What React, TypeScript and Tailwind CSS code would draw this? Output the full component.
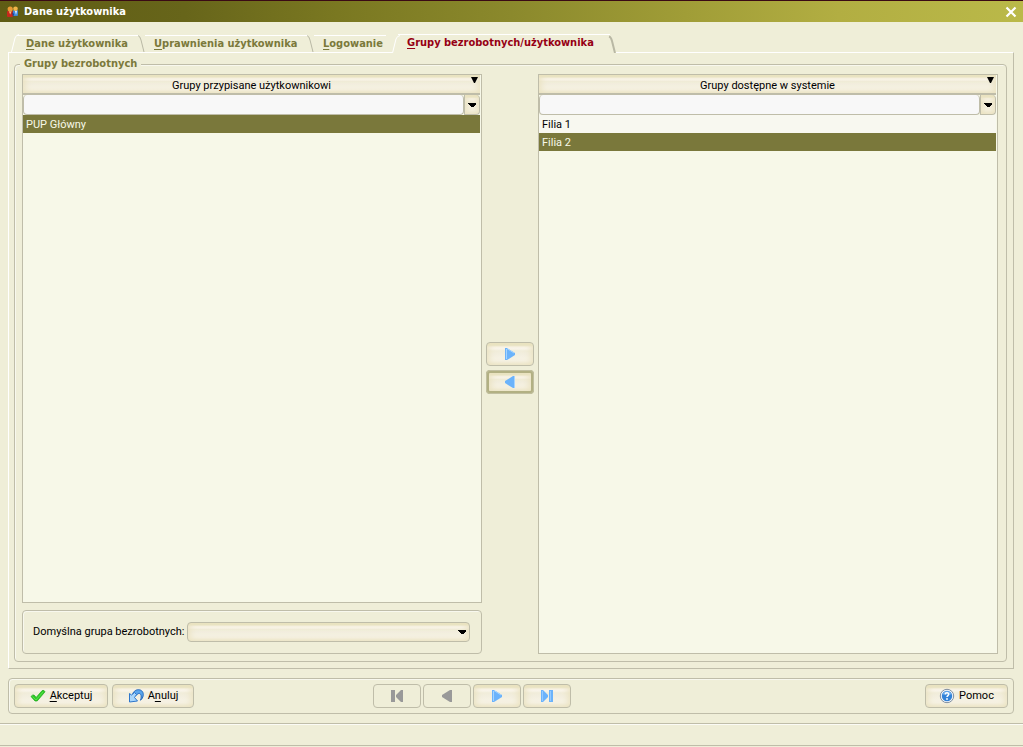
import { useState } from "react";
import type { ReactNode } from "react";

type Tab = { id: string; key: string; rest: string; width: string };

const tabs: Tab[] = [
  { id: "user", key: "D", rest: "ane użytkownika", width: "w-[134px]" },
  { id: "rights", key: "U", rest: "prawnienia użytkownika", width: "w-[169px]" },
  { id: "login", key: "L", rest: "ogowanie", width: "w-[78px]" },
  { id: "groups", key: "G", rest: "rupy bezrobotnych/użytkownika", width: "w-[224px]" },
];

const boldFont = "font-['DejaVu_Sans_Condensed','DejaVu_Sans',sans-serif] font-bold";

const glossy =
  "bg-[linear-gradient(to_bottom,#e9e5c0_0%,#e9e5c4_10%,#fcf8f2_18%,#fbf7f0_26%,#f1edda_36%,#f3efe0_55%,#f9f6ec_82%,#f3eedc_100%)] shadow-[inset_0_0_7px_2px_#eae2c0]";

function UsersIcon() {
  return (
    <svg width="12" height="12" viewBox="0 0 12 12" aria-hidden="true">
      <rect x="6" y="4" width="5" height="6" rx="1" fill="#3f86d6" />
      <circle cx="8.5" cy="2.800" r="2.300" fill="#f0b64a" />
      <path d="M8 5l1 4 1-4z" fill="#e8f2ff" />
      <rect x="0" y="5" width="6" height="6" rx="1" fill="#c8281c" />
      <circle cx="3.2" cy="3" r="2.600" fill="#e89a35" />
      <path d="M2 5.500l1.200 3 1.300-3z" fill="#f3c27a" />
      <path d="M5 6l1 5 1-3z" fill="#1c3f8c" />
    </svg>
  );
}

function CheckIcon() {
  return (
    <svg width="16" height="16" viewBox="0 0 16 16" aria-hidden="true">
      <path
        d="M1 8.500Q2.500 6.500 4 7L6.200 9.400 12.200 2.500Q14 1.800 15 3.800L7.200 13H5z"
        fill="#2fcb27"
        stroke="#1da51a"
        strokeWidth="0.7"
        strokeLinejoin="round"
      />
      <path d="M2.5 8.6L6 12l7.2-8.2" fill="none" stroke="#63e957" strokeWidth="0.8" />
    </svg>
  );
}

function UndoIcon() {
  return (
    <svg width="16" height="16" viewBox="0 0 16 16" aria-hidden="true">
      <path
        d="M4.500 6.500C5.500 3 8.500 1.200 11.500 1.800 15 2.500 16 6 14.800 9c-.5 1.500-1.300 2.600-2.300 3.200.8-2.200 1-4.400.2-5.700-1-1.700-3.200-1.200-4.200.9"
        fill="#5aa5ec"
        stroke="#2368bd"
        strokeWidth="1"
        strokeLinejoin="round"
      />
      <path
        d="M1.500 5.500l2 1.500 3-2.500 2 2L6.500 9.500l3 3.500-8 1z"
        fill="#a9d6fb"
        stroke="#2d76cb"
        strokeWidth="1"
        strokeLinejoin="round"
      />
    </svg>
  );
}

function HelpIcon() {
  return (
    <svg width="16" height="16" viewBox="0 0 16 16" aria-hidden="true">
      <circle cx="8" cy="8" r="6.700" fill="#f3f6fa" stroke="#7f8ea0" strokeWidth="1" />
      <circle cx="8" cy="8" r="5.200" fill="#3282d8" />
      <path d="M3.500 6.500a4.800 4.800 0 0 1 9 0z" fill="#73b1ee" />
      <path d="M6.200 6.400c.2-2.200 3.700-1.900 3.500 0-.1 1.200-1.700 1.200-1.700 2.600" fill="none" stroke="#fff" strokeWidth="1.500" />
      <circle cx="8" cy="11" r="0.900" fill="#fff" />
    </svg>
  );
}

type ArrowKind = "first" | "prev" | "next" | "last";

const arrowPaths: Record<ArrowKind, string> = {
  first: "M1 0h4v12H1zM13 0v12h-2L6 7V5l5-5z",
  prev: "M12 0v12h-2L2 7V5l8-5z",
  next: "M2 0v12h2l8-5V5L4 0z",
  last: "M1 0v12h2l5-5V5L3 0zM9 0h4v12H9z",
};

function ArrowIcon({ kind, disabled = false }: { kind: ArrowKind; disabled?: boolean }) {
  return (
    <svg width="14" height="12" viewBox="0 0 14 12" aria-hidden="true">
      <path d={arrowPaths[kind]} fill={disabled ? "#999999" : "#6bb3fb"} />
      {!disabled && kind === "next" && <path d="M3.500 1v10M4 .5l7 4.500" stroke="#a6d4ff" strokeWidth="1" fill="none" />}
      {!disabled && kind === "prev" && <path d="M11.500 0v12" stroke="#a6d4ff" strokeWidth="1" fill="none" />}
      {!disabled && kind === "last" && <path d="M2.500 1v10M10.500 1v10" stroke="#95caff" strokeWidth="1" fill="none" />}
    </svg>
  );
}

function DownArrow() {
  return (
    <svg width="8" height="4" viewBox="0 0 8 4" aria-hidden="true" shapeRendering="crispEdges">
      <path d="M0 0h8v1L5 4H3L0 1z" fill="#000" />
    </svg>
  );
}

type ButtonProps = {
  children: ReactNode;
  width: string;
  label?: string;
  disabled?: boolean;
  focused?: boolean;
};

function Button({ children, width, label, disabled = false, focused = false }: ButtonProps) {
  const surface = disabled ? "" : glossy;
  const border = focused
    ? "border-3 border-[#b2b083] outline-1 -outline-offset-1 outline-[#c1bfa0]"
    : "border border-[#bfbda9]";

  return (
    <button
      type="button"
      aria-label={label}
      disabled={disabled}
      className={`flex h-6 shrink-0 items-center justify-center gap-1 rounded ${width} ${border} ${surface}`}
    >
      {children}
    </button>
  );
}

function TabButton({ tab, active, first, onClick }: { tab: Tab; active: boolean; first: boolean; onClick: () => void }) {
  return (
    <button
      type="button"
      role="tab"
      aria-selected={active}
      onClick={onClick}
      className={`relative shrink-0 text-left ${boldFont} ${tab.width} ${first || active ? "pl-[15px]" : "pl-[9px]"} ${
        active ? "-mb-px h-[19px] bg-[#efeed8] pb-[2px] text-[#960014]" : "h-[17px] text-[#7b793b]"
      }`}
    >
      {/* Slanted edges */}
      <span className={`absolute top-0 right-[6px] h-px bg-white ${first || active ? "left-[6px]" : "left-0"}`} />
      {(first || active) && (
        <svg className="absolute bottom-0 left-0" width="8" height="18" viewBox="0 0 8 18" aria-hidden="true">
          <path d="M.5 18L4 4Q5 1 8 .5" fill="none" stroke="#fff" />
        </svg>
      )}
      {tab.id !== "login" && (
        <svg className="absolute right-0 bottom-0" width="8" height="18" viewBox="0 0 8 18" aria-hidden="true">
          <path d="M1 1.500Q3 2 4 6L7 18" fill="none" stroke="#b9b8a4" strokeWidth={active ? 2 : 1} />
        </svg>
      )}
      <span className="underline underline-offset-2">{tab.key}</span>
      {tab.rest}
    </button>
  );
}

type GroupListProps = {
  title: string;
  items: string[];
  selected: string;
  onSelect: (item: string) => void;
};

function GroupList({ title, items, selected, onSelect }: GroupListProps) {
  const [filter, setFilter] = useState("");

  return (
    <div className="flex min-h-0 flex-1 flex-col border border-[#bfbda9] bg-[#f7f8e8] pr-px">
      {/* Column header */}
      <button
        type="button"
        className={`relative flex h-5 shrink-0 items-center justify-center border-b-2 border-[#bfbda9] pt-1 ${glossy}`}
      >
        {title}
        <svg className="absolute top-[2px] right-[2px]" width="7" height="6" viewBox="0 0 7 6" aria-hidden="true">
          <path d="M0 0h7L4 6H3z" fill="#000" />
        </svg>
      </button>

      {/* Filter */}
      <div className="flex h-5 shrink-0">
        <input
          aria-label={`Filtr: ${title}`}
          value={filter}
          onChange={(e) => setFilter(e.target.value)}
          className="min-w-0 flex-1 rounded-sm border border-t-0 border-[#bfbda9] bg-[#f8f8f8] px-1 outline-none"
        />
        <button
          type="button"
          aria-label="Rozwiń filtr"
          className={`flex w-4 items-center justify-center rounded-r border border-t-0 border-[#bfbda9] ${glossy}`}
        >
          <DownArrow />
        </button>
      </div>

      {/* Rows */}
      <ul>
        {items.map((item) => (
          <li key={item}>
            <button
              type="button"
              onClick={() => onSelect(item)}
              className={`block h-[18px] w-full px-[3px] pt-px text-left ${
                item === selected ? "bg-[#7a783b] text-[#f7f8e8]" : "bg-[#f8f8f0] text-black"
              }`}
            >
              {item}
            </button>
          </li>
        ))}
      </ul>
    </div>
  );
}

export default function App() {
  const [activeTab, setActiveTab] = useState("groups");
  const [assigned, setAssigned] = useState("PUP Główny");
  const [available, setAvailable] = useState("Filia 2");

  return (
    <div className="flex min-h-screen flex-col bg-[#efeed8] font-[Roboto,sans-serif] text-[11px] leading-4 text-black">
      {/* Title bar */}
      <header className="flex h-[22px] shrink-0 items-center border-t border-[#3a0a14] bg-[linear-gradient(to_right,#5f5c14_0%,#67651a_18%,#7a7821_33%,#8b892c_50%,#a09d37_67%,#b2ae42_82%,#bab949_100%)] pr-[6px] pl-[7px]">
        <UsersIcon />
        <h1 className={`ml-[5px] flex-1 text-white ${boldFont}`}>Dane użytkownika</h1>
        <button type="button" aria-label="Zamknij">
          <svg width="12" height="12" viewBox="0 0 12 12" aria-hidden="true">
            <path d="M1.500 1.500l9 9M10.500 1.500l-9 9" stroke="#fff" strokeWidth="2.200" />
          </svg>
        </button>
      </header>

      {/* Tabs */}
      <div role="tablist" className="flex h-[30px] shrink-0 items-end px-[11px]">
        {tabs.map((tab, i) => (
          <TabButton
            key={tab.id}
            tab={tab}
            first={i === 0}
            active={tab.id === activeTab}
            onClick={() => setActiveTab(tab.id)}
          />
        ))}
      </div>

      <main className="mr-[9px] ml-2 flex flex-1 flex-col border border-t-white border-r-[#bfbda9] border-b-[#bfbda9] border-l-white pt-[11px] pr-[6px] pb-[6px] pl-[5px]">
        <section
          aria-labelledby="groups-title"
          className="flex flex-1 flex-col rounded border border-[#bfbda9] pr-2 pb-[7px] pl-[7px] shadow-[inset_1px_1px_0_#f8f8ee]"
        >
          <h2 id="groups-title" className={`-mt-[9px] -ml-[2px] w-fit bg-[#efeed8] px-1 text-[#7b793b] ${boldFont}`}>
            Grupy bezrobotnych
          </h2>

          <div className="mt-[2px] flex flex-1">
            {/* Assigned groups */}
            <div className="flex flex-1 flex-col gap-[7px]">
              <GroupList
                title="Grupy przypisane użytkownikowi"
                items={["PUP Główny"]}
                selected={assigned}
                onSelect={setAssigned}
              />
              <div className="flex h-11 shrink-0 items-center rounded border border-[#bfbda9] pr-[11px] pl-[10px] shadow-[inset_1px_1px_0_#f8f8ee]">
                <label htmlFor="default-group">Domyślna grupa bezrobotnych:</label>
                <div className="relative ml-[3px] flex flex-1">
                  <select
                    id="default-group"
                    defaultValue=""
                    className={`h-5 w-full appearance-none rounded border border-[#bfbda9] px-1 ${glossy}`}
                  >
                    <option value=""></option>
                    <option>PUP Główny</option>
                  </select>
                  <span className="pointer-events-none absolute inset-y-0 right-1 flex items-center">
                    <DownArrow />
                  </span>
                </div>
              </div>
            </div>

            {/* Move buttons */}
            <div className="flex w-14 shrink-0 flex-col items-center justify-center gap-1 pt-2">
              <Button width="w-12" label="Odbierz grupę">
                <ArrowIcon kind="next" />
              </Button>
              <Button width="w-12" label="Przypisz grupę" focused>
                <ArrowIcon kind="prev" />
              </Button>
            </div>

            {/* Available groups */}
            <div className="flex flex-1 flex-col">
              <GroupList
                title="Grupy dostępne w systemie"
                items={["Filia 1", "Filia 2"]}
                selected={available}
                onSelect={setAvailable}
              />
            </div>
          </div>
        </section>
      </main>

      {/* Actions */}
      <div className="mt-[9px] mr-[9px] ml-2 flex h-9 shrink-0 items-center gap-1 rounded border border-[#bfbda9] px-[5px] shadow-[inset_1px_1px_0_#f8f8ee]">
        <Button width="w-[94px]">
          <CheckIcon />
          <span>
            <span className="underline underline-offset-2">A</span>kceptuj
          </span>
        </Button>
        <Button width="w-[82px]">
          <UndoIcon />
          <span>
            A<span className="underline underline-offset-2">n</span>uluj
          </span>
        </Button>
        <nav className="ml-[175px] flex gap-[2px]">
          <Button width="w-12" label="Pierwszy" disabled>
            <ArrowIcon kind="first" disabled />
          </Button>
          <Button width="w-12" label="Poprzedni" disabled>
            <ArrowIcon kind="prev" disabled />
          </Button>
          <Button width="w-12" label="Następny">
            <ArrowIcon kind="next" />
          </Button>
          <Button width="w-12" label="Ostatni">
            <ArrowIcon kind="last" />
          </Button>
        </nav>
        <div className="ml-auto">
          <Button width="w-[83px]">
            <HelpIcon />
            Pomoc
          </Button>
        </div>
      </div>

      {/* Status bar */}
      <footer className="mt-[9px] mb-px h-[23px] shrink-0 border-y border-[#bfbda9] shadow-[inset_0_1px_0_#fbfbf5]" />
    </div>
  );
}
